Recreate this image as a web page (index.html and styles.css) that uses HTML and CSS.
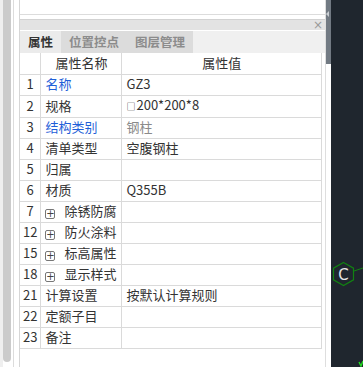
FILE: index.html
```html
<!DOCTYPE html>
<html lang="zh-CN">
<head>
  <meta charset="UTF-8" />
  <title>属性</title>
  <link rel="stylesheet" href="styles.css">
</head>
<body>
  <div class="left-strip">
    <div class="scroll-track"><div class="scroll-thumb"></div></div>
    <div class="strip-line"></div>
  </div>

  <div class="panel">
    <div class="top-box"></div>
    <div class="panel-head"><span class="close">×</span></div>
    <div class="tabs">
      <span class="tab active">属性</span>
      <span class="tab">位置控点</span>
      <span class="tab">图层管理</span>
    </div>
    <div class="table-wrap">
      <table class="props">
        <thead>
          <tr><th class="num"></th><th class="name">属性名称</th><th class="value">属性值</th></tr>
        </thead>
        <tbody>
          <tr><td class="num">1</td><td class="link">名称</td><td>GZ3</td></tr>
          <tr><td class="num">2</td><td>规格</td><td><span class="sq">□</span>200*200*8</td></tr>
          <tr><td class="num">3</td><td class="link">结构类别</td><td class="muted">钢柱</td></tr>
          <tr><td class="num">4</td><td>清单类型</td><td>空腹钢柱</td></tr>
          <tr><td class="num">5</td><td>归属</td><td></td></tr>
          <tr><td class="num">6</td><td>材质</td><td>Q355B</td></tr>
          <tr><td class="num">7</td><td><span class="plus">+</span>除锈防腐</td><td></td></tr>
          <tr><td class="num">12</td><td><span class="plus">+</span>防火涂料</td><td></td></tr>
          <tr><td class="num">15</td><td><span class="plus">+</span>标高属性</td><td></td></tr>
          <tr><td class="num">18</td><td><span class="plus">+</span>显示样式</td><td></td></tr>
          <tr><td class="num">21</td><td>计算设置</td><td>按默认计算规则</td></tr>
          <tr><td class="num">22</td><td>定额子目</td><td></td></tr>
          <tr><td class="num">23</td><td>备注</td><td></td></tr>
        </tbody>
      </table>
    </div>
  </div>

  <div class="splitter">
    <div class="split-thumb"><span class="arrow"></span></div>
  </div>

  <div class="canvas">
    <svg class="drawing" width="32" height="367" viewBox="0 0 32 367">
      <line x1="23" y1="271" x2="32" y2="268" stroke="#128212" stroke-width="1"/>
      <polygon points="12.5,262.5 22.5,268.2 22.5,279.8 12.5,285.5 2.5,279.8 2.5,268.2" fill="none" stroke="#128212" stroke-width="1.2"/>
      <text x="12.5" y="280" text-anchor="middle" class="axis-label">C</text>
      <path d="M28 362 L30 366 L32 361" fill="none" stroke="#22dd22" stroke-width="1.4"/>
    </svg>
  </div>
</body>
</html>
```

FILE: styles.css
```css
* {
  box-sizing: border-box;
}
html, body {
  margin: 0;
  height: 100%;
}
body {
  display: flex;
  width: 363px;
  height: 367px;
  overflow: hidden;
  font-family: "Noto Sans CJK SC", "Noto Sans", sans-serif;
  font-size: 13px;
  color: #333;
  background: #fff;
}

/* Left scroll strip */
.left-strip {
  width: 19px;
  display: flex;
  background: #fff;
}
.scroll-track {
  width: 13px;
  padding-left: 3px;
  padding-right: 2px;
  background: linear-gradient(to right, #efefef 0 3px, #fff 3px);
}
.scroll-thumb {
  width: 8px;
  height: 362px;
  background: #cbcbcb;
  border-radius: 0 0 4px 4px;
}
.strip-line {
  width: 1px;
  background: #dcdcdc;
}

/* Property panel */
.panel {
  width: 308px;
  display: flex;
  flex-direction: column;
  border-left: 1px solid #d6d6d6;
  border-right: 1px solid #dedede;
}
.top-box {
  height: 15px;
  flex-shrink: 0;
  border-bottom: 1px solid #dcdcdc;
  margin-bottom: 4px;
}
.panel-head {
  height: 11px;
  flex-shrink: 0;
  background: #e3e3e3;
  border-top: 1px solid #d2d2d2;
  display: flex;
  justify-content: flex-end;
  align-items: center;
  padding-right: 2px;
}
.close {
  font-family: "DejaVu Sans", sans-serif;
  font-size: 12px;
  line-height: 10px;
  color: #9a9a9a;
}
.tabs {
  height: 22px;
  flex-shrink: 0;
  margin-top: 1px;
  background: #f0f0f0;
  display: flex;
}
.tab {
  display: flex;
  align-items: center;
  padding: 0 8px 1px;
  font-weight: 700;
  font-size: 12.5px;
  color: #8c8c8c;
  background: #dcdcdc;
}
.tab.active {
  color: #333;
  background: #ebebeb;
}

/* Table */
.table-wrap {
  padding-right: 3px;
}
.props {
  width: 100%;
  border-collapse: collapse;
  table-layout: fixed;
}
.props th,
.props td {
  height: 21px;
  padding: 0 0 1px 4px;
  border: 1px solid #dadada;
  font-weight: 400;
  white-space: nowrap;
  overflow: hidden;
  line-height: 18px;
}
.props tr:first-child th {
  border-top: none;
}
.props th:first-child,
.props td:first-child {
  border-left: none;
}
.props th {
  text-align: center;
  padding: 0 0 1px;
}
.props .num {
  width: 21px;
  text-align: center;
  padding: 0 0 1px;
}
.props .name {
  width: 81px;
}
.props td.link {
  color: #1f5fd8;
}
.props td.muted {
  color: #8a8a8a;
}
.sq {
  font-size: 9px;
  margin-right: 1px;
}
.plus {
  display: inline-flex;
  justify-content: center;
  align-items: center;
  width: 10px;
  height: 10px;
  margin-right: 9px;
  border: 1px solid #777;
  border-radius: 2px;
  font-family: "DejaVu Sans", sans-serif;
  font-size: 10px;
  line-height: 1;
  color: #444;
  vertical-align: -1px;
}

/* Splitter and drawing canvas */
.splitter {
  width: 5px;
  background: #fff;
}
.split-thumb {
  position: relative;
  height: 64px;
  background: #727a83;
}
.arrow {
  position: absolute;
  left: 0;
  top: 11px;
  border-top: 3px solid transparent;
  border-bottom: 3px solid transparent;
  border-right: 3px solid #c9cdd2;
}
.canvas {
  flex: 1;
  background: #1f262e;
}
.drawing {
  display: block;
}
.axis-label {
  font-family: "DejaVu Sans", sans-serif;
  font-size: 15px;
  fill: #e4e4e4;
}
```
